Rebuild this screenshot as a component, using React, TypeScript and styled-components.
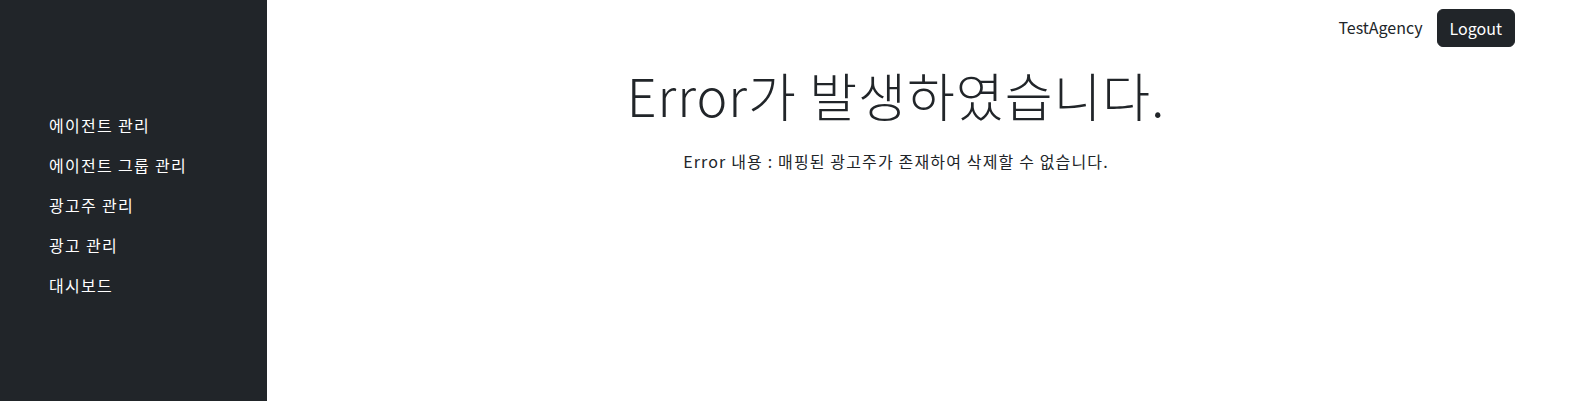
import React from "react";
import styled, { createGlobalStyle } from "styled-components";

const menus = ["에이전트 관리", "에이전트 그룹 관리", "광고주 관리", "광고 관리", "대시보드"];

export default function App() {
	return (
		<>
			<GlobalStyle />
			<Layout>
				<Sidebar>
					<NavList>
						{menus.map((m) => (
							<NavItem key={m}>
								<NavLink href="#">{m}</NavLink>
							</NavItem>
						))}
					</NavList>
				</Sidebar>
				<Main>
					<Header>
						<UserName>TestAgency</UserName>
						<LogoutButton type="button">Logout</LogoutButton>
					</Header>
					<Content>
						<Title>Error가 발생하였습니다.</Title>
						<Message>Error 내용 : 매핑된 광고주가 존재하여 삭제할 수 없습니다.</Message>
					</Content>
				</Main>
			</Layout>
		</>
	);
}

const GlobalStyle = createGlobalStyle`
	html, body {
		margin: 0;
		padding: 0;
		background: #fff;
	}
	body {
		font-family: "Noto Sans CJK KR", "Noto Sans", sans-serif;
		font-size: 16px;
		line-height: 1.5;
		color: #212529;
	}
	* {
		box-sizing: border-box;
	}
`;

const Layout = styled.div`
	display: flex;
	min-height: 100vh;
`;

const Sidebar = styled.aside`
	width: 267px;
	flex-shrink: 0;
	background: #212529;
	padding: 105px 0 0 33px;
`;

const NavList = styled.ul`
	list-style: none;
	margin: 0;
	padding: 0;
`;

const NavItem = styled.li`
	margin: 0;
`;

const NavLink = styled.a`
	display: block;
	padding: 8px 16px;
	color: #fff;
	text-decoration: none;
	font-size: 16px;
	line-height: 24px;
	letter-spacing: 1.3px;
`;

const Main = styled.main`
	flex: 1;
	display: flex;
	flex-direction: column;
	padding-right: 66px;
`;

const Header = styled.header`
	display: flex;
	justify-content: flex-end;
	align-items: center;
	gap: 14px;
	padding: 9px 10px 0 0;
`;

const UserName = styled.span`
	font-size: 16px;
	line-height: 20px;
	padding-bottom: 3px;
	color: #212529;
`;

const LogoutButton = styled.button`
	height: 38px;
	padding: 6px 12px;
	font-family: inherit;
	font-size: 16px;
	line-height: 24px;
	color: #fff;
	background: #212529;
	border: 1px solid #212529;
	border-radius: 6px;
	cursor: pointer;
`;

const Content = styled.section`
	display: flex;
	flex-direction: column;
	align-items: center;
	text-align: center;
`;

const Title = styled.h1`
	margin: 17px 0 0;
	font-size: 52px;
	font-weight: 300;
	line-height: 1.2;
	letter-spacing: 1px;
`;

const Message = styled.p`
	margin: 23px 0 0;
	font-size: 16px;
	letter-spacing: 1.15px;
`;
